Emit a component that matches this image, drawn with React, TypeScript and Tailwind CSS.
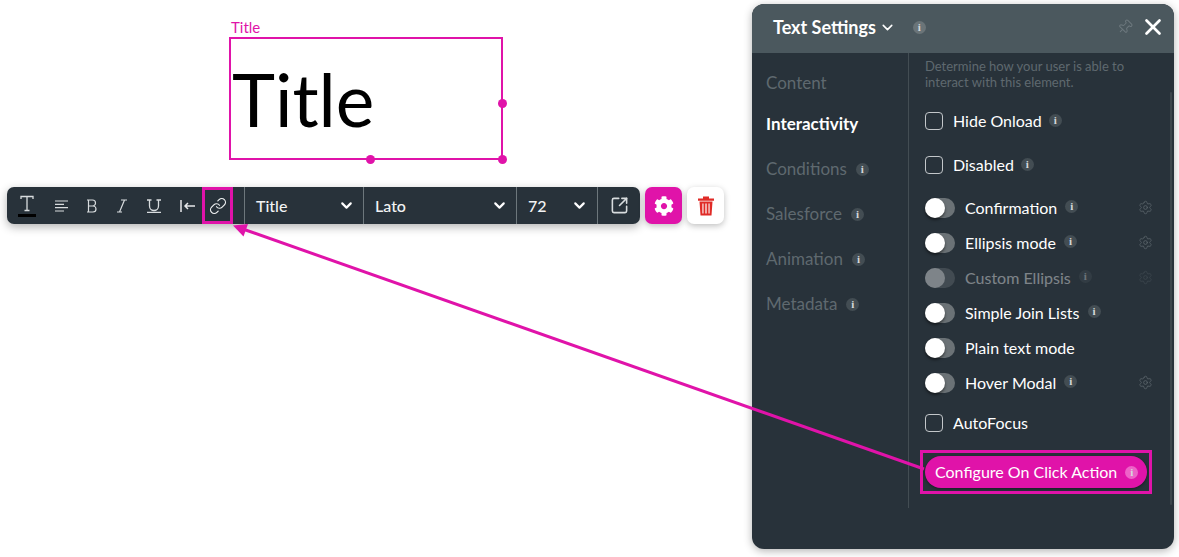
import { ChevronDown, Link, Pin, Settings, SquareArrowOutUpRight, X } from 'lucide-react';
import { FaCog } from 'react-icons/fa';

const PINK = '#e013a9';

function InfoDot({ className = 'bg-[#434d53]' }: { className?: string }) {
  return (
    <span
      className={`flex h-[13px] w-[13px] shrink-0 items-center justify-center rounded-full font-['Liberation_Serif',serif] text-[11px] leading-none font-bold text-[#d5d8da] ${className}`}>
      i
    </span>
  );
}

function ToolIcon({ width, children, className = '' }: { width: string; children: React.ReactNode; className?: string }) {
  return <div className={`flex h-full shrink-0 items-center justify-center text-[#d8dcde] ${width} ${className}`}>{children}</div>;
}

function Select({ label, width, pad }: { label: string; width: string; pad: string }) {
  return (
    <div className={`flex h-full shrink-0 items-center justify-between border-r border-[#6d777c] pl-[11px] ${width} ${pad}`}>
      <span className="text-[16px] font-medium text-[#f2f3f4]">{label}</span>
      <ChevronDown size={17} strokeWidth={3} className="text-white" />
    </div>
  );
}

function Toolbar() {
  return (
    <div className="flex items-start gap-[5px]">
      <div className="flex h-[37px] w-[633px] items-center rounded-[7px] bg-[#28323a] shadow-[0_3px_10px_rgba(0,0,0,0.3)]">
        <ToolIcon width="w-[40px]">
          <svg width="20" height="26" viewBox="0 0 20 26" fill="none">
            <path d="M4 6V3.5h12V6M10 3.5v14M7.5 17.5h5" stroke="#d8dcde" strokeWidth="1.3" />
            <rect x="1" y="21" width="18" height="3" fill="#000" />
          </svg>
        </ToolIcon>
        <ToolIcon width="w-[29px]">
          <svg width="15" height="12" viewBox="0 0 15 12" stroke="#d8dcde" strokeWidth="1.2">
            <path d="M1 1h13M1 4.3h9M1 7.6h13M1 11h9" />
          </svg>
        </ToolIcon>
        <ToolIcon width="w-[31px]">
          <svg width="12" height="14" viewBox="0 0 12 14" fill="none" stroke="#d8dcde" strokeWidth="1.2">
            <path d="M1 1h5.5a3 3 0 0 1 0 6H2.5M2.5 1v12M1 13h6a3 3 0 0 0 0-6" />
          </svg>
        </ToolIcon>
        <ToolIcon width="w-[30px]">
          <svg width="12" height="14" viewBox="0 0 12 14" fill="none" stroke="#d8dcde" strokeWidth="1.2">
            <path d="M5 1h6M8.5 1 3.5 13M1 13h5" />
          </svg>
        </ToolIcon>
        <ToolIcon width="w-[33px]" className="pl-[1px]">
          <svg width="14" height="14" viewBox="0 0 14 14" fill="none" stroke="#d8dcde" strokeWidth="1.3">
            <path d="M2.5 1v6a4.5 4.5 0 0 0 9 0V1M0 1h4.5M9.5 1H14M0 13.3h14" />
          </svg>
        </ToolIcon>
        <ToolIcon width="w-[32px]" className="pl-[3px]">
          <svg width="15" height="12" viewBox="0 0 15 12" fill="none" stroke="#e6e8ea" strokeWidth="1.5">
            <path d="M1 0v12M15 6H5M8 3 5 6l3 3" />
          </svg>
        </ToolIcon>
        <ToolIcon width="w-[31px]" className="h-[38px] self-start border-[3px] border-[#e013a9]">
          <Link size={18} strokeWidth={1.6} className="text-[#eef0f1]" />
        </ToolIcon>
        <div className="h-full w-[12px] shrink-0 border-r border-[#6d777c]" />
        <Select label="Title" width="w-[119px]" pad="pr-[8px]" />
        <Select label="Lato" width="w-[153px]" pad="pr-[8px]" />
        <Select label="72" width="w-[81px]" pad="pr-[9px]" />
        <ToolIcon width="w-[42px]">
          <SquareArrowOutUpRight size={19} strokeWidth={2} />
        </ToolIcon>
      </div>
      <div className="flex h-[37px] w-[37px] items-center justify-center rounded-[7px] bg-[#e013a9] shadow-[0_2px_6px_rgba(0,0,0,0.25)]">
        <FaCog size={20} className="text-white" />
      </div>
      <div className="flex h-[37px] w-[37px] items-center justify-center rounded-[7px] bg-white shadow-[0_2px_6px_rgba(0,0,0,0.25)]">
        <svg width="16" height="20" viewBox="0 0 16 20" fill="#e02b27">
          <path d="M0 2.5h16v2.2H0zM5 .5h6v2H5z" />
          <path d="M1.5 5.5h13l-1 14h-11zM4.4 7.5v10h1.1v-10zM7.4 7.5v10h1.2v-10zM10.5 7.5v10h1.1v-10z" fillRule="evenodd" />
        </svg>
      </div>
    </div>
  );
}

function Check({ label, info, className = '' }: { label: string; info?: boolean; className?: string }) {
  return (
    <div className={`flex items-center ${className}`}>
      <span className="h-[18px] w-[18px] rounded-[4px] border border-[#c3c7ca]" />
      <span className="ml-[10px] text-[16px] text-white">{label}</span>
      {info && <InfoDot className="ml-[7px] -translate-y-px bg-[#434d53]" />}
    </div>
  );
}

function ToggleRow({ label, info, gear, dim }: { label: string; info?: boolean; gear?: boolean; dim?: boolean }) {
  return (
    <div className={`flex h-[35px] items-center pr-[17px] ${dim ? 'opacity-40' : ''}`}>
      <span className="relative h-[20px] w-[30px] rounded-full bg-[#6b7276]">
        <span className={`absolute top-0 left-0 h-[20px] w-[20px] rounded-full bg-white ${dim ? '' : 'shadow-[0_2px_3px_rgba(0,0,0,0.5)]'}`} />
      </span>
      <span className="ml-[10px] text-[16px] text-white">{label}</span>
      {info && <InfoDot className="ml-[8px] -translate-y-px bg-[#434d53]" />}
      {gear && <Settings size={15} strokeWidth={1.3} className="ml-auto text-[#5b656b]" />}
    </div>
  );
}

function SideItem({ label, info, active, className = '' }: { label: string; info?: boolean; active?: boolean; className?: string }) {
  return (
    <div className={`flex h-[24px] items-center ${className}`}>
      <span className={active ? 'text-[17px] font-bold text-white' : 'text-[17px] text-[#5f696f]'}>{label}</span>
      {info && <InfoDot className="ml-[9px] bg-[#434d53]" />}
    </div>
  );
}

function Panel() {
  return (
    <div className="mt-[4px] flex h-[545px] w-[422px] shrink-0 flex-col overflow-hidden rounded-[12px] bg-[#28323a] shadow-[0_2px_8px_rgba(0,0,0,0.3)]">
      <div className="flex h-[49px] shrink-0 items-center bg-[#4b585e] pr-[8px] pb-[3px] pl-[21px]">
        <span className="text-[18px] font-bold text-white">Text Settings</span>
        <ChevronDown size={17} strokeWidth={2.2} className="ml-[3px] text-white" />
        <InfoDot className="ml-[17px] bg-[#6a7478]" />
        <Pin size={16} strokeWidth={1.5} className="ml-auto rotate-45 text-[#6d787e]" />
        <X size={26} strokeWidth={2.5} className="ml-[7px] text-white" />
      </div>
      <div className="relative flex min-h-0 flex-1">
        <div className="w-[156px] shrink-0 pt-[18px] pl-[14px]">
          <SideItem label="Content" />
          <SideItem label="Interactivity" active className="mt-[17px]" />
          <SideItem label="Conditions" info className="mt-[21px]" />
          <SideItem label="Salesforce" info className="mt-[21px]" />
          <SideItem label="Animation" info className="mt-[21px]" />
          <SideItem label="Metadata" info className="mt-[21px]" />
        </div>
        <div className="mb-[41px] w-[262px] shrink-0 border-l border-[#434d53] pl-[16px]">
          <p className="mt-[5px] text-[13px] leading-[16px] text-[#5f696f]">
            Determine how your user is able to
            <br />
            interact with this element.
          </p>
          <Check label="Hide Onload" info className="mt-[19px]" />
          <Check label="Disabled" info className="mt-[20px]" />
          <div className="mt-[13px]">
            <ToggleRow label="Confirmation" info gear />
            <ToggleRow label="Ellipsis mode" info gear />
            <ToggleRow label="Custom Ellipsis" info gear dim />
            <ToggleRow label="Simple Join Lists" info />
            <ToggleRow label="Plain text mode" />
            <ToggleRow label="Hover Modal" info gear />
          </div>
          <Check label="AutoFocus" className="mt-[11px]" />
          <div className="mt-[15px] -ml-[5px] flex h-[44px] w-[232px] items-center border-[3px] border-[#e013a9] pl-[2px]">
            <div className="flex h-[32px] w-[222px] items-center rounded-full bg-[#e013a9] pl-[10px] shadow-[0_1px_3px_rgba(0,0,0,0.4)]">
              <span className="text-[16px] text-white">Configure On Click Action</span>
              <InfoDot className="ml-[8px] bg-[#ee62c8]" />
            </div>
          </div>
        </div>
        <div className="absolute top-[39px] right-[2px] h-[413px] w-[2px] rounded-full bg-[#3c464c]" />
      </div>
    </div>
  );
}

export default function App() {
  return (
    <div className="relative flex h-[557px] w-[1179px] overflow-hidden bg-white font-['Lato',sans-serif]">
      <div className="w-[752px] shrink-0">
        <div className="ml-[229px] w-[274px] pt-[18px]">
          <div className="h-[19px] pl-[2px] text-[15px] leading-[19px] text-[#e013a9]">Title</div>
          <div className="relative h-[123px] border-2 border-[#e013a9]">
            <span className="block pl-[1px] text-[73px] leading-[120px] text-black">Title</span>
            <span className="absolute top-[60px] -right-[6px] h-[9px] w-[9px] rounded-full bg-[#e013a9]" />
            <span className="absolute -bottom-[6px] left-[135px] h-[9px] w-[9px] rounded-full bg-[#e013a9]" />
            <span className="absolute -right-[6px] -bottom-[6px] h-[9px] w-[9px] rounded-full bg-[#e013a9]" />
          </div>
        </div>
        <div className="mt-[27px] ml-[7px]">
          <Toolbar />
        </div>
      </div>
      <Panel />
      <svg className="pointer-events-none absolute top-0 left-0" width="1179" height="557" viewBox="0 0 1179 557" fill="none">
        <path d="M924 469 240 228" stroke={PINK} strokeWidth="3" />
        <path d="M233 225.5 248 224 243.5 236.5Z" fill={PINK} />
      </svg>
    </div>
  );
}
